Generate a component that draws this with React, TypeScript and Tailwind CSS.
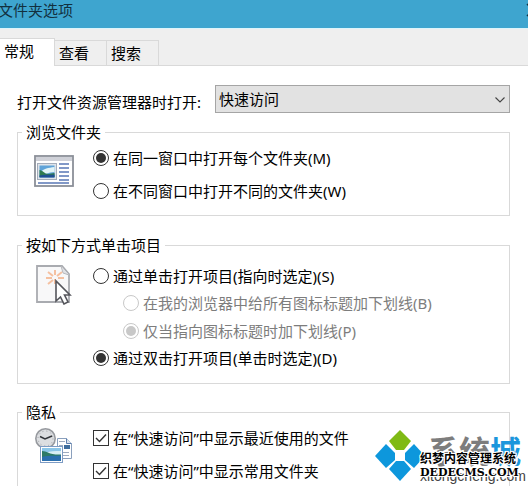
import { useState, type ReactNode } from "react";

const tabs = ["常规", "查看", "搜索"];

const browseOptions = [
  { value: "same", label: "在同一窗口中打开每个文件夹(M)" },
  { value: "separate", label: "在不同窗口中打开不同的文件夹(W)" },
];

const underlineOptions = [
  { value: "always", label: "在我的浏览器中给所有图标标题加下划线(B)" },
  { value: "hover", label: "仅当指向图标标题时加下划线(P)" },
];

const privacyOptions = [
  { id: "recent", label: "在“快速访问”中显示最近使用的文件" },
  { id: "frequent", label: "在“快速访问”中显示常用文件夹" },
];

function Group({
  title,
  icon,
  className = "",
  children,
}: {
  title: string;
  icon: ReactNode;
  className?: string;
  children: ReactNode;
}) {
  return (
    <fieldset className={`min-w-0 border border-[#d9d9d9] ${className}`}>
      <legend className="ml-1 px-1 leading-5">{title}</legend>
      <div className="flex pl-4">
        <div className="w-[59px] shrink-0">{icon}</div>
        <div className="min-w-0 flex-1">{children}</div>
      </div>
    </fieldset>
  );
}

interface RadioProps {
  name: string;
  label: string;
  checked: boolean;
  disabled?: boolean;
  onChange?: () => void;
}

function Radio({ name, label, checked, disabled, onChange }: RadioProps) {
  return (
    <label className="flex items-center gap-1 leading-5 has-disabled:text-[#7d7d7d]">
      <input
        type="radio"
        name={name}
        checked={checked}
        disabled={disabled}
        onChange={onChange}
        className="size-4 shrink-0 appearance-none rounded-full border border-[#333] bg-white bg-clip-content p-[2px] checked:bg-[#333] disabled:border-[#c8c8c8] disabled:checked:bg-[#c8c8c8]"
      />
      {label}
    </label>
  );
}

function Checkbox({ label }: { label: string }) {
  return (
    <label className="flex items-center gap-1 leading-5">
      <span className="grid size-4 shrink-0">
        <input
          type="checkbox"
          defaultChecked
          className="peer col-start-1 row-start-1 size-4 appearance-none border border-[#333] bg-white"
        />
        <svg
          viewBox="0 0 16 16"
          className="pointer-events-none invisible col-start-1 row-start-1 size-4 peer-checked:visible"
        >
          <path d="M3 8l3.5 3.5L13 4.5" fill="none" stroke="#333" strokeWidth="1.4" />
        </svg>
      </span>
      {label}
    </label>
  );
}

function WindowIcon() {
  return (
    <svg width="40" height="34" viewBox="0 0 40 34">
      <rect x="1" y="2" width="38" height="30" fill="#fff" stroke="#8b8f98" strokeWidth="1.8" />
      <rect x="2" y="3" width="36" height="4" fill="#cfd1d8" />
      <rect x="3.5" y="9.5" width="19" height="16" fill="#dfe4ea" stroke="#a3acba" />
      <rect x="5.5" y="11.5" width="15" height="12" fill="#5fa3d8" />
      <path d="M6 19c4-5 8-5 14.5-6v5c-6 0-10 3-14.5 4z" fill="#e2f4f7" />
      <path d="M5.5 16c3 0 5 4 9 4l6-1v4h-15z" fill="#2f7a50" />
      <path d="M5.5 21.5c5-1.5 10 0 15-1v3h-15z" fill="#1f4f93" />
      <path
        d="M25 10h10M25 14h10M25 18h10M25 22h10M25 26h10M4 29h31"
        stroke="#5877b5"
        strokeWidth="1.4"
      />
    </svg>
  );
}

function PointerIcon() {
  return (
    <svg width="38" height="42" viewBox="0 0 38 42">
      <path d="M3 3h25l7 8v28H3z" fill="#f8f8f9" stroke="#a9abb0" strokeWidth="1.8" />
      <path d="M27 3l2 7 6 2" fill="#e0e1e5" stroke="#b7b9bd" />
      <path
        d="M21 7v5M21 16v5M12 15h6M24 15h6M14 9l5 4M28 9l-5 4M14 21l5-4"
        stroke="#f5c0a0"
        strokeWidth="2"
      />
      <path
        d="M22 18v20l4.5-4 3.5 7 4-2-3.5-7h5.5z"
        fill="#fff"
        stroke="#55565c"
        strokeWidth="1.6"
      />
    </svg>
  );
}

function HistoryIcon() {
  return (
    <svg width="40" height="38" viewBox="0 0 40 38">
      <path d="M23.5 10.5h9l5 5v15h-14z" fill="#fff" stroke="#8ba0bd" />
      <path d="M32.5 10.5v5h5" fill="#dbe3ee" stroke="#5c7fae" />
      <path d="M25 13.5h6M25 17.5h4M25 24.5h10M25 27.5h10" stroke="#9dabc0" />
      <rect x="30" y="17" width="6" height="4" fill="#3f6d9d" />
      <circle cx="11.5" cy="10.5" r="9.7" fill="#dcdee1" stroke="#979a9f" strokeWidth="1.6" />
      <circle cx="11.5" cy="10.5" r="7.5" fill="none" stroke="#9c9fa4" strokeDasharray="1 3" />
      <path d="M6 8.5l5 2.5 7-3" fill="none" stroke="#33363b" strokeWidth="1.5" />
      <rect x="6.5" y="18.5" width="22" height="16" fill="#fff" stroke="#7e9cc4" />
      <rect x="8" y="20" width="19" height="13" fill="#8cc6e8" />
      <path d="M12 25c4-2 9-2 15-2v4H12z" fill="#d8eef4" />
      <path d="M8 23c5 0 7 4 19 3.5V30H8z" fill="#2d7a67" />
      <path d="M8 29c6-2 12-1 19-1.5V33H8z" fill="#2b6fae" />
    </svg>
  );
}

function Watermark() {
  return (
    <div className="pointer-events-none absolute right-0 bottom-0 flex w-[154px] items-end">
      <svg width="54" height="52" viewBox="0 0 54 52" className="mb-1 shrink-0">
        <path d="M26 0l11 11-7 9h-8l-7-9z" fill="#7fba15" />
        <path d="M12 14l9 9v7l-9 8L1 26z" fill="#0d97dc" />
        <path d="M40 14l11 12-11 12-9-8v-7z" fill="#0d97dc" />
        <path d="M22 31h8l7 8-11 12-11-12z" fill="#0d97dc" />
      </svg>
      <div className="-ml-2 grid">
        <div className="col-start-1 row-start-1">
          <div className="pl-2 text-[31px] leading-[29px] font-bold whitespace-nowrap text-[#7d7d7d]">
            系统<span className="text-[#1b96dc]">城</span>
          </div>
          <div className="font-['Liberation_Sans',sans-serif] text-sm leading-5 text-[#444]">
            xitongcheng.com
          </div>
        </div>
        <div className="col-start-1 row-start-1 pt-3.5 whitespace-nowrap text-black [text-shadow:1px_0_#fff,-1px_0_#fff,0_1px_#fff,0_-1px_#fff,1px_1px_#fff,-1px_-1px_#fff,1px_-1px_#fff,-1px_1px_#fff]">
          <div className="text-xs leading-4 font-bold">织梦内容管理系统</div>
          <div className="font-['DejaVu_Serif',serif] text-[11px] leading-3 font-bold">
            DEDECMS.COM
          </div>
        </div>
      </div>
    </div>
  );
}

export default function App() {
  const [activeTab, setActiveTab] = useState("常规");
  const [browse, setBrowse] = useState("same");
  const [click, setClick] = useState("double");

  return (
    <div className="relative flex h-screen flex-col overflow-hidden bg-white font-['Noto_Sans','Noto_Sans_CJK_SC',sans-serif] text-[15px] text-black">
      {/* Title bar */}
      <header className="flex h-7 shrink-0 items-center justify-between bg-[#3ea5cf] pb-2 text-[#12303f]">
        <h1 className="-ml-0.5 leading-5">文件夹选项</h1>
        <button type="button" aria-label="关闭" className="-mr-3">
          <svg width="14" height="14" viewBox="0 0 14 14">
            <path d="M1 1l12 12M13 1L1 13" stroke="currentColor" strokeWidth="1.5" />
          </svg>
        </button>
      </header>

      {/* Tabs */}
      <nav
        role="tablist"
        className="flex h-[38px] shrink-0 items-end border-t border-b border-t-[#dcf5fb] border-b-[#d9d9d9] bg-[#efefef]"
      >
        {tabs.map((tab) => (
          <button
            key={tab}
            type="button"
            role="tab"
            aria-selected={activeTab === tab}
            onClick={() => setActiveTab(tab)}
            className="h-[25px] w-[52px] border-t border-r border-[#d9d9d9] pl-1 text-left leading-5 first:w-[55px] aria-selected:-mb-px aria-selected:h-7 aria-selected:bg-white aria-selected:pb-1"
          >
            {tab}
          </button>
        ))}
      </nav>

      <main className="flex flex-1 flex-col pr-[18px] pl-[17px]">
        <div className="mt-[19px] flex h-7 shrink-0 items-center">
          <label htmlFor="open-to" className="w-[198px] shrink-0 pt-1.5 leading-5">
            打开文件资源管理器时打开:
          </label>
          <div className="relative flex-1">
            <select
              id="open-to"
              className="h-7 w-full appearance-none border border-[#a5a5a5] bg-[#e2e2e2] pl-[3px] leading-5"
            >
              <option>快速访问</option>
              <option>此电脑</option>
            </select>
            <svg
              width="10"
              height="6"
              viewBox="0 0 10 6"
              className="pointer-events-none absolute top-3 right-[5px]"
            >
              <path d="M.5.5L5 5 9.5.5" fill="none" stroke="#444" strokeWidth="1.1" />
            </svg>
          </div>
        </div>

        <Group title="浏览文件夹" icon={<div className="pt-3"><WindowIcon /></div>} className="mt-[9px]">
          <div className="flex flex-col gap-[13px] pt-1.5 pb-3.5">
            {browseOptions.map((option) => (
              <Radio
                key={option.value}
                name="browse"
                label={option.label}
                checked={browse === option.value}
                onChange={() => setBrowse(option.value)}
              />
            ))}
          </div>
        </Group>

        <Group title="按如下方式单击项目" icon={<div className="pt-2"><PointerIcon /></div>} className="mt-[19px]">
          <div className="flex flex-col gap-[7px] pt-[11px] pb-[15px]">
            <Radio
              name="click"
              label="通过单击打开项目(指向时选定)(S)"
              checked={click === "single"}
              onChange={() => setClick("single")}
            />
            <div className="flex flex-col gap-2 pl-[30px]">
              {underlineOptions.map((option) => (
                <Radio
                  key={option.value}
                  name="underline"
                  label={option.label}
                  checked={option.value === "hover"}
                  disabled={click === "double"}
                />
              ))}
            </div>
            <Radio
              name="click"
              label="通过双击打开项目(单击时选定)(D)"
              checked={click === "double"}
              onChange={() => setClick("double")}
            />
          </div>
        </Group>

        <Group title="隐私" icon={<div className="pt-1.5"><HistoryIcon /></div>} className="mt-[18px] flex-1 border-b-0">
          <div className="flex flex-col gap-[13px] pt-1.5">
            {privacyOptions.map((option) => (
              <Checkbox key={option.id} label={option.label} />
            ))}
          </div>
        </Group>
      </main>

      <Watermark />
    </div>
  );
}
